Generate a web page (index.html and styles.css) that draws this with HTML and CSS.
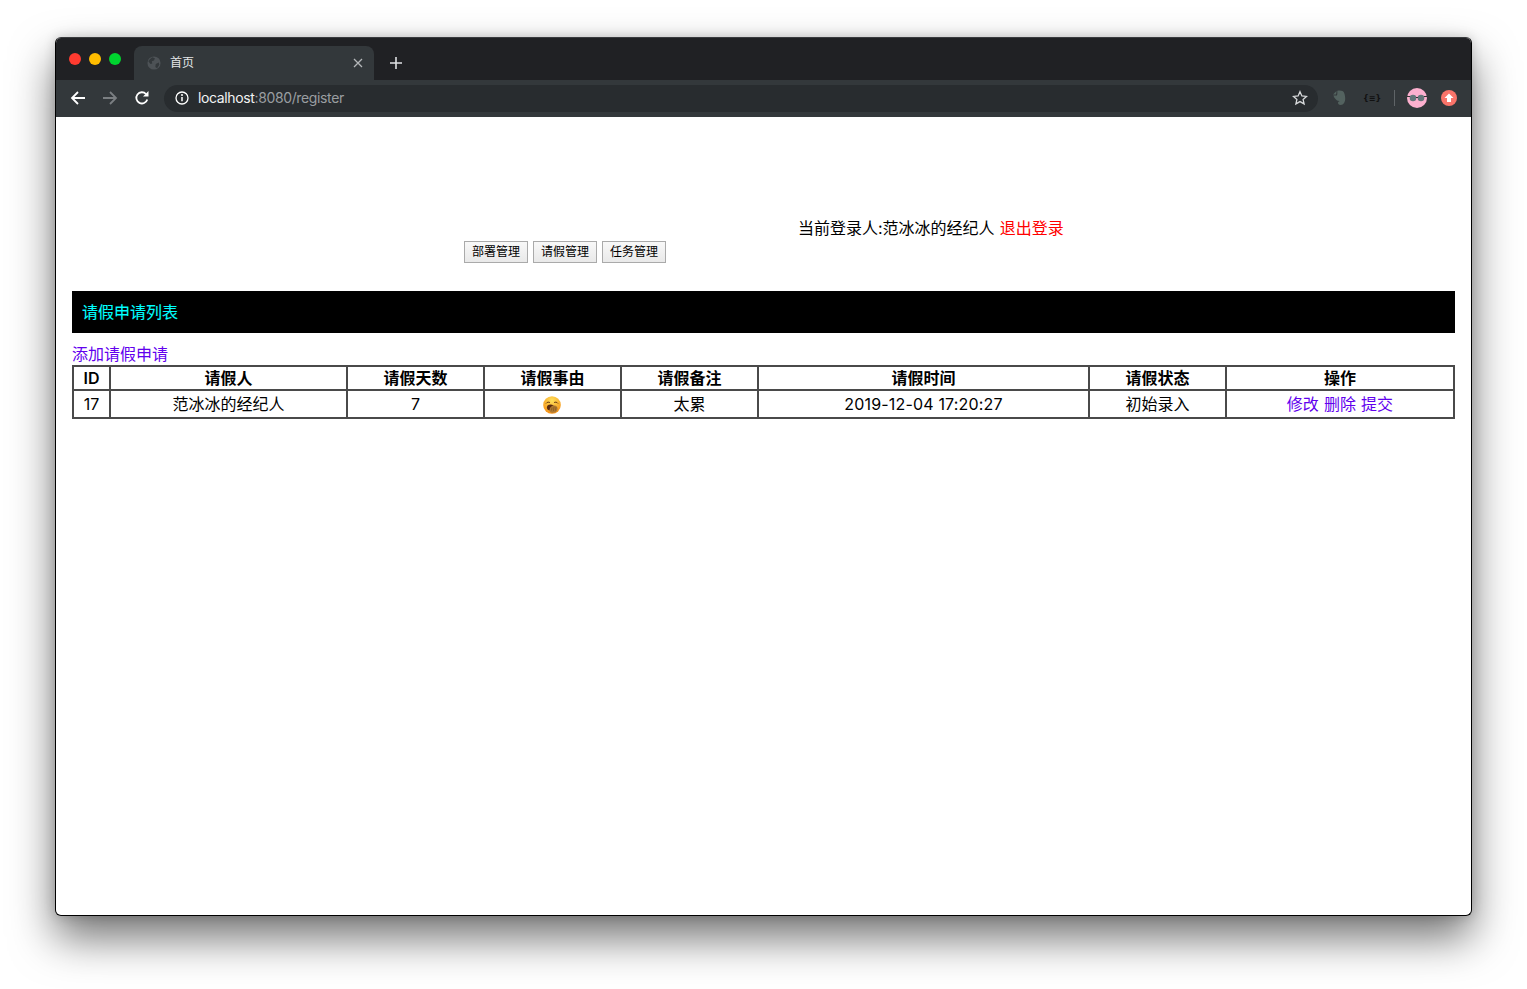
FILE: index.html
```html
<!DOCTYPE html>
<html lang="zh">
<head>
<meta charset="utf-8">
<title>首页</title>
<link rel="stylesheet" href="styles.css">
</head>
<body>
<div class="window">
  <div class="tabstrip">
    <div class="lights"><i class="light red"></i><i class="light yellow"></i><i class="light green"></i></div>
    <div class="tab">
      <svg class="favicon" viewBox="0 0 16 16"><circle cx="8" cy="8" r="7.500" fill="#4d5256"/><path d="M3 4l3-2.500 3 1-1 2.500-2.500 1 .5 2.500-2 .5L1.500 6zM10 9l3.500-1.500L14 10l-2.500 4-2-1.500z" fill="#33383b"/></svg>
      <span class="tab-title">首页</span>
      <svg class="tab-close" viewBox="0 0 10 10"><path d="M1 1l8 8M9 1l-8 8" stroke="#b4b7b9" stroke-width="1.300" fill="none"/></svg>
    </div>
    <svg class="newtab" viewBox="0 0 12 12"><path d="M6 0v12M0 6h12" stroke="#dfe1e3" stroke-width="1.600"/></svg>
  </div>
  <div class="toolbar">
    <svg class="nav-icon" viewBox="0 0 16 16"><path d="M15 8H2M8 2L2 8l6 6" stroke="#fff" stroke-width="1.800" fill="none"/></svg>
    <svg class="nav-icon dim" viewBox="0 0 16 16"><path d="M1 8h13M8 2l6 6-6 6" stroke="#7b7f82" stroke-width="1.800" fill="none"/></svg>
    <svg class="nav-icon" viewBox="0 0 16 16"><path d="M13.300 9.500A5.600 5.600 0 1 1 12 4" stroke="#fff" stroke-width="1.800" fill="none"/><path d="M14.500 1v5.500H9z" fill="#fff"/></svg>
    <div class="omnibox">
      <svg class="info" viewBox="0 0 14 14"><circle cx="7" cy="7" r="6" stroke="#fff" stroke-width="1.300" fill="none"/><path d="M7 6v4.200" stroke="#fff" stroke-width="1.500"/><circle cx="7" cy="4" r="1" fill="#fff"/></svg>
      <span class="url"><b>localhost</b>:8080/register</span>
      <svg class="star" viewBox="0 0 16 16"><path d="M8 1.700l1.900 4.200 4.600.5-3.400 3 1 4.500L8 11.600l-4.100 2.300 1-4.500-3.400-3 4.600-.5z" stroke="#d6d8da" stroke-width="1.300" fill="none"/></svg>
    </div>
    <div class="extensions">
      <svg class="ext-ever" viewBox="0 0 14 16"><path d="M1 4.500L4.500 1c0 1.500-.2 2.800-.5 3.500zM5.300.8C7 .2 9 .3 10.500 1c1.800.8 2.700 4.500 2.700 7.500 0 3.500-1.500 6.500-4.500 6.500-2 0-2.700-1-2.700-2.200s1-1.800 2.200-1.600c-1.500-.4-3-.4-4-1.500C2.800 8.500 1.800 7 1.400 5.500H5c.4-1 .4-3 .3-4.700z" fill="#53625f"/></svg>
      <span class="ext-json">{≡}</span>
      <i class="ext-sep"></i>
      <svg class="ext-avatar" viewBox="0 0 20 20"><circle cx="10" cy="10" r="10" fill="#fdb0cf"/><circle cx="6" cy="10" r="3.300" fill="#65757a"/><circle cx="14" cy="10" r="3.300" fill="#65757a"/><path d="M0 8.500l3 0M17 8.500h3M9 9.500h2" stroke="#333" stroke-width="1"/></svg>
      <svg class="ext-up" viewBox="0 0 16 16"><circle cx="8" cy="8" r="8" fill="#f9746a"/><path d="M8 3.500L12.500 8H10v4H6V8H3.500z" fill="#fff"/></svg>
    </div>
  </div>
  <main class="page">
    <div class="userline">当前登录人:范冰冰的经纪人 <a class="logout" href="#">退出登录</a></div>
    <div class="menu">
      <button class="menu-btn">部署管理</button>
      <button class="menu-btn">请假管理</button>
      <button class="menu-btn">任务管理</button>
    </div>
    <h1 class="banner">请假申请列表</h1>
    <a class="add" href="#">添加请假申请</a>
    <table class="grid">
      <colgroup>
        <col class="c-id"><col class="c-name"><col class="c-mid"><col class="c-mid"><col class="c-mid"><col class="c-time"><col class="c-mid"><col class="c-ops">
      </colgroup>
      <thead>
        <tr><th>ID</th><th>请假人</th><th>请假天数</th><th>请假事由</th><th>请假备注</th><th>请假时间</th><th>请假状态</th><th>操作</th></tr>
      </thead>
      <tbody>
        <tr>
          <td>17</td>
          <td>范冰冰的经纪人</td>
          <td>7</td>
          <td>
            <svg class="emoji" viewBox="0 0 18 18" role="img" aria-label="yawning face">
              <defs><radialGradient id="face" cx="50%" cy="25%" r="75%"><stop offset="0" stop-color="#ffe05a"/><stop offset="1" stop-color="#f58f14"/></radialGradient></defs>
              <circle cx="9" cy="9" r="8.800" fill="url(#face)"/>
              <path d="M3 7.500c1-1.500 3-1.800 4-.8M11 6.700c1-1 3-.7 4 .8" stroke="#6a3c12" stroke-width="1" fill="none"/>
              <ellipse cx="7.500" cy="11.500" rx="3.600" ry="3" fill="#5a2a10"/>
              <path d="M6.500 14.500c0-3 2.200-5 4.700-5s3.800 1.800 3.300 4-2.500 3.300-4.500 3.300-3.500-.8-3.500-2.300z" fill="#b07a32"/>
              <path d="M9 11.500l-.5 3M11 10.500l-.5 4.500M13 11l-.5 3.500" stroke="#7a4f1c" stroke-width=".6"/>
            </svg>
          </td>
          <td>太累</td>
          <td class="time">2019-12-04 17:20:27</td>
          <td>初始录入</td>
          <td class="ops"><a class="op" href="#">修改</a> <a class="op" href="#">删除</a> <a class="op" href="#">提交</a></td>
        </tr>
      </tbody>
    </table>
  </main>
</div>
</body>
</html>
```
FILE: styles.css
```css
html, body {
  margin: 0;
  background: #fff;
}
body {
  padding: 37px 55px 73px;
  font-family: Inter, "Noto Sans CJK SC", sans-serif;
  font-size: 16px;
  color: #000;
}
.window {
  width: 1417px;
  height: 879px;
  box-sizing: border-box;
  border: 1px solid #000;
  border-top-color: #3a3c3f;
  border-radius: 6px;
  background: #fff;
  overflow: hidden;
  display: flex;
  flex-direction: column;
  box-shadow: 0 22px 44px rgba(0, 0, 0, .55), 0 0 12px rgba(0, 0, 0, .18);
}
.tabstrip {
  height: 42px;
  flex: none;
  background: #202124;
  display: flex;
  align-items: flex-end;
}
.lights {
  width: 78px;
  align-self: flex-start;
  display: flex;
  gap: 8px;
  padding: 15px 0 0 13px;
  box-sizing: border-box;
}
.light {
  width: 12px;
  height: 12px;
  border-radius: 50%;
}
.red { background: #ff3b30; }
.yellow { background: #ffbd00; }
.green { background: #00d42f; }
.tab {
  width: 240px;
  height: 34px;
  background: #33383b;
  border-radius: 8px 8px 0 0;
  display: flex;
  align-items: center;
  color: #e3e5e6;
  font-size: 12px;
  box-sizing: border-box;
  padding: 0 11px 1px 13px;
}
.favicon { width: 14px; height: 14px; flex: none; }
.tab-title { margin: 0 0 2px 9px; flex: 1; }
.tab-close { width: 10px; height: 10px; flex: none; }
.newtab {
  width: 12px;
  height: 12px;
  margin: 0 0 11px 16px;
}
.toolbar {
  height: 37px;
  flex: none;
  background: #33383b;
  display: flex;
  align-items: center;
  padding: 0 0 1px 14px;
  box-sizing: border-box;
}
.nav-icon { width: 16px; height: 16px; flex: none; margin-right: 16px; }
.omnibox {
  width: 1154px;
  height: 27px;
  margin-left: -2px;
  border-radius: 14px;
  background: #282c2f;
  display: flex;
  align-items: center;
  box-sizing: border-box;
  padding: 0 10px 0 11px;
}
.info { width: 14px; height: 14px; flex: none; }
.url {
  margin-left: 9px;
  flex: 1;
  font-size: 14px;
  line-height: 16px;
  letter-spacing: -.37px;
  color: #9a9ea1;
}
.url b { font-weight: 400; color: #f2f3f3; }
.star { width: 16px; height: 16px; flex: none; }
.extensions {
  display: flex;
  align-items: center;
  margin-left: 14px;
}
.ext-ever { width: 14px; height: 16px; }
.ext-json {
  width: 16px;
  margin-left: 17px;
  font-size: 8px;
  text-align: center;
  color: #111;
  font-family: "DejaVu Sans", sans-serif;
  font-weight: 700;
  white-space: nowrap;
}
.ext-sep {
  width: 1px;
  height: 16px;
  background: #5f6467;
  margin-left: 15px;
}
.ext-avatar { width: 20px; height: 20px; margin-left: 12px; }
.ext-up { width: 16px; height: 16px; margin-left: 14px; }
.page {
  flex: 1;
  padding: 0 16px;
}
.userline {
  margin-top: 100px;
  padding-left: 726px;
  height: 24px;
  line-height: 23px;
  word-spacing: .6px;
}
.logout { color: #f00; text-decoration: none; }
.menu {
  display: flex;
  gap: 5px;
  padding-left: 392px;
  height: 22px;
}
.menu-btn {
  width: 64px;
  height: 22px;
  padding: 0 0 4px;
  border: 1px solid #aaa;
  background: linear-gradient(#f8f8f8, #e9e9e9);
  font: 12px "Noto Sans CJK SC", sans-serif;
  color: #000;
  border-radius: 0;
}
.banner {
  margin: 28px 0 0;
  height: 42px;
  line-height: 43px;
  padding-left: 10px;
  background: #000;
  color: #0ff;
  font-size: 16px;
  font-weight: 400;
  -webkit-text-stroke: .1px #0ff;
}
.add {
  display: block;
  margin-top: 11px;
  height: 21px;
  line-height: 21px;
  color: #6200ee;
  text-decoration: none;
}
.grid {
  width: 100%;
  table-layout: fixed;
  border-collapse: separate;
  border-spacing: 0;
  border: 1px solid #4a4a4a;
}
.grid th, .grid td {
  border: 1px solid #4a4a4a;
  padding: 0;
  box-sizing: border-box;
  text-align: center;
  font-size: 16px;
}
.grid th { height: 24px; line-height: 22px; font-weight: 600; }
.grid td { height: 28px; line-height: 26px; }
.c-id { width: 37px; }
.c-name { width: 237px; }
.c-mid { width: 137px; }
.c-time { width: 331px; }
.c-ops { width: auto; }
.time { letter-spacing: .17px; }
.ops { word-spacing: .6px; }
.op { color: #6200ee; text-decoration: none; }
.emoji { width: 18px; height: 18px; vertical-align: -4px; display: inline-block; margin-left: -1px; }
```
